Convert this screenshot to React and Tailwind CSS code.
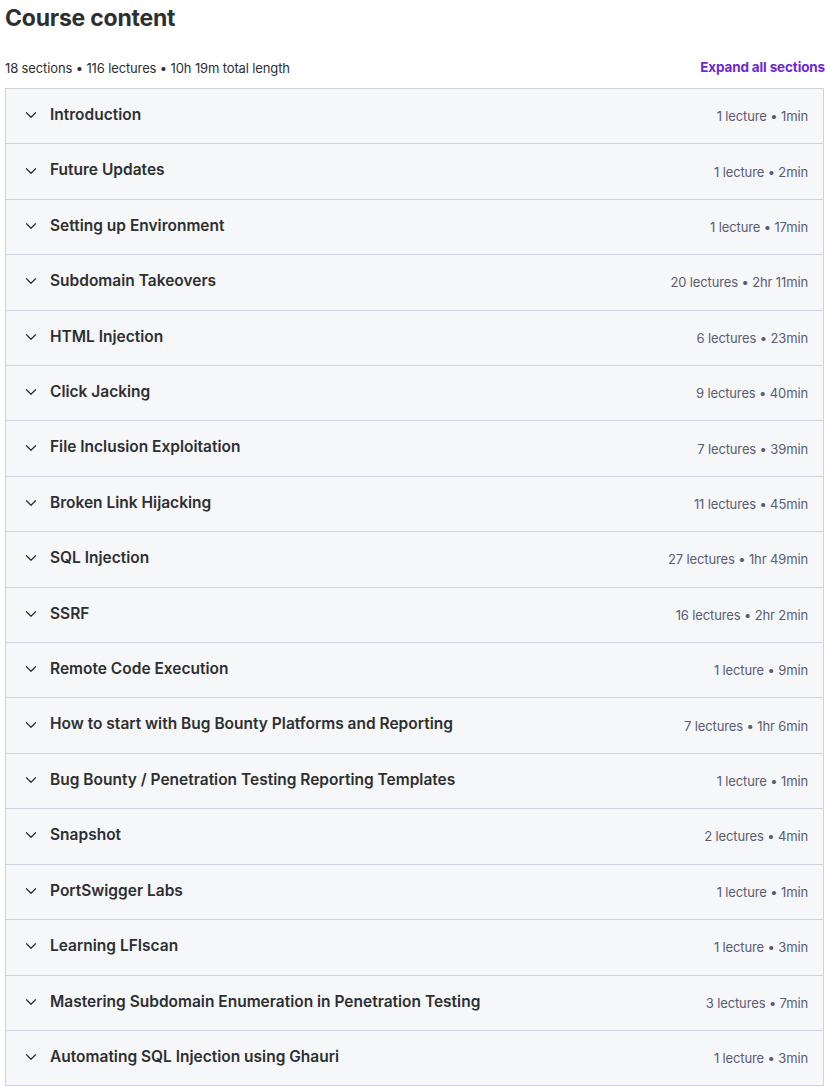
import { ChevronDown } from 'lucide-react'

const sections = [
  ['Introduction', '1 lecture • 1min'],
  ['Future Updates', '1 lecture • 2min'],
  ['Setting up Environment', '1 lecture • 17min'],
  ['Subdomain Takeovers', '20 lectures • 2hr 11min'],
  ['HTML Injection', '6 lectures • 23min'],
  ['Click Jacking', '9 lectures • 40min'],
  ['File Inclusion Exploitation', '7 lectures • 39min'],
  ['Broken Link Hijacking', '11 lectures • 45min'],
  ['SQL Injection', '27 lectures • 1hr 49min'],
  ['SSRF', '16 lectures • 2hr 2min'],
  ['Remote Code Execution', '1 lecture • 9min'],
  ['How to start with Bug Bounty Platforms and Reporting', '7 lectures • 1hr 6min'],
  ['Bug Bounty / Penetration Testing Reporting Templates', '1 lecture • 1min'],
  ['Snapshot', '2 lectures • 4min'],
  ['PortSwigger Labs', '1 lecture • 1min'],
  ['Learning LFIscan', '1 lecture • 3min'],
  ['Mastering Subdomain Enumeration in Penetration Testing', '3 lectures • 7min'],
  ['Automating SQL Injection using Ghauri', '1 lecture • 3min'],
]

function SectionRow({ title, meta }) {
  return (
    <div className="flex items-center border-b border-[#d1d2e0] bg-[#f6f7f9] py-4 pl-4 pr-[15px] last:border-b-0">
      <ChevronDown size={18} strokeWidth={1.6} className="shrink-0 -translate-y-[1px] text-[#2d2f31]" />
      <span className="ml-[10px] flex-1 -translate-y-[1px] text-[15.5px] font-semibold leading-[22.4px] text-[#2d2f31]">
        {title}
      </span>
      <span className="text-[13px] leading-[1.4] tracking-[-0.01em] text-[#595c73]">{meta}</span>
    </div>
  )
}

export default function App() {
  return (
    <div className="min-h-screen bg-white pl-[5px] font-['Inter',sans-serif] text-[#2d2f31]">
      <h1 className="pt-[3px] text-[23px] font-bold leading-[30px] tracking-[-0.01em]">Course content</h1>
      <div className="mt-[25px] mb-[10px] flex items-center justify-between leading-5">
        <span className="text-[13px] tracking-[-0.01em] text-[#2d2f31]">
          18 sections • 116 lectures • 10h 19m total length
        </span>
        <button className="-translate-y-[1px] text-[13.5px] font-bold tracking-[-0.01em] text-[#6d28d2]">
          Expand all sections
        </button>
      </div>
      <div className="mr-[1px] border border-[#d1d2e0]">
        {sections.map(([title, meta]) => (
          <SectionRow key={title} title={title} meta={meta} />
        ))}
      </div>
    </div>
  )
}
